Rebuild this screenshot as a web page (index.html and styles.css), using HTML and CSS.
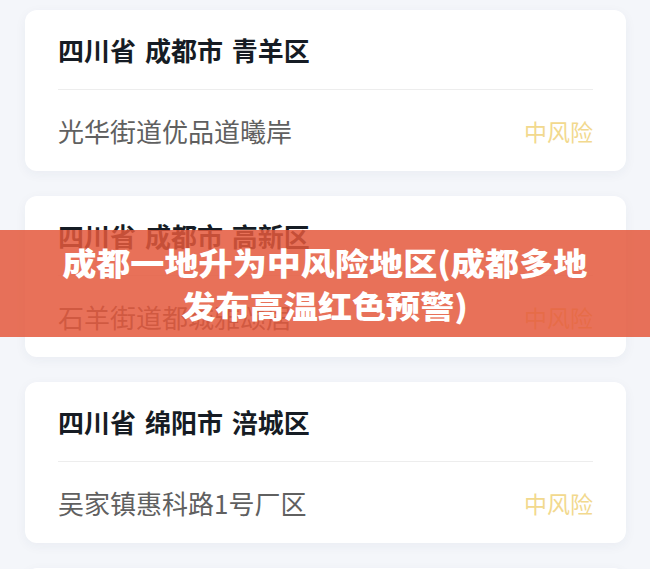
FILE: index.html
```html
<!DOCTYPE html>
<html lang="zh-CN">
<head>
    <meta charset="UTF-8">
    <meta name="viewport" content="width=device-width, initial-scale=1.0">
    <title>风险地区</title>
    <link rel="stylesheet" href="styles.css">
</head>
<body>

<div class="area-list">
    <div class="card">
        <div class="card-head">四川省 成都市 青羊区</div>
        <div class="card-body">
            <span class="place">光华街道优品道曦岸</span>
            <span class="level">中风险</span>
        </div>
    </div>

    <div class="card">
        <div class="card-head">四川省 成都市 高新区</div>
        <div class="card-body">
            <span class="place">石羊街道都城雅颂居</span>
            <span class="level">中风险</span>
        </div>
    </div>

    <div class="card">
        <div class="card-head">四川省 绵阳市 涪城区</div>
        <div class="card-body">
            <span class="place">吴家镇惠科路1号厂区</span>
            <span class="level">中风险</span>
        </div>
    </div>

    <div class="card">
        <div class="card-head">四川省 成都市 锦江区</div>
        <div class="card-body">
            <span class="place">春熙路街道</span>
            <span class="level">中风险</span>
        </div>
    </div>
</div>

<div class="banner">
    <span class="banner-text">成都一地升为中风险地区(成都多地<br>发布高温红色预警)</span>
</div>

</body>
</html>
```

FILE: styles.css
```css
body {
    font-family: "Noto Sans CJK SC", "Noto Sans", sans-serif;
    background-color: #f4f6fa;
    margin: 0;
    padding: 0;
}
.area-list {
    display: flex;
    flex-direction: column;
    gap: 25px;
    padding: 10px 24px 0 25px;
}
.card {
    background-color: #fff;
    border-radius: 12px;
    padding: 0 33px;
    box-shadow: 0 3px 12px rgba(40, 60, 100, 0.05);
}
.card-head {
    height: 79px;
    display: flex;
    align-items: center;
    font-size: 26px;
    font-weight: bold;
    word-spacing: 3px;
    color: #161c24;
}
.card-body {
    height: 81px;
    display: flex;
    align-items: center;
    justify-content: space-between;
    border-top: 1px solid #ededed;
}
.place {
    font-size: 26px;
    color: #606060;
}
.level {
    font-size: 23px;
    color: #f2d98e;
}
.banner {
    position: absolute;
    top: 230px;
    left: 0;
    right: 0;
    height: 107px;
    padding-top: 10px;
    box-sizing: border-box;
    background-color: rgba(228, 88, 60, 0.85);
    text-align: center;
}
.banner-text {
    display: inline-block;
    transform: scaleX(1.1);
    font-size: 31px;
    font-weight: 900;
    line-height: 43px;
    color: #fff;
}
```
